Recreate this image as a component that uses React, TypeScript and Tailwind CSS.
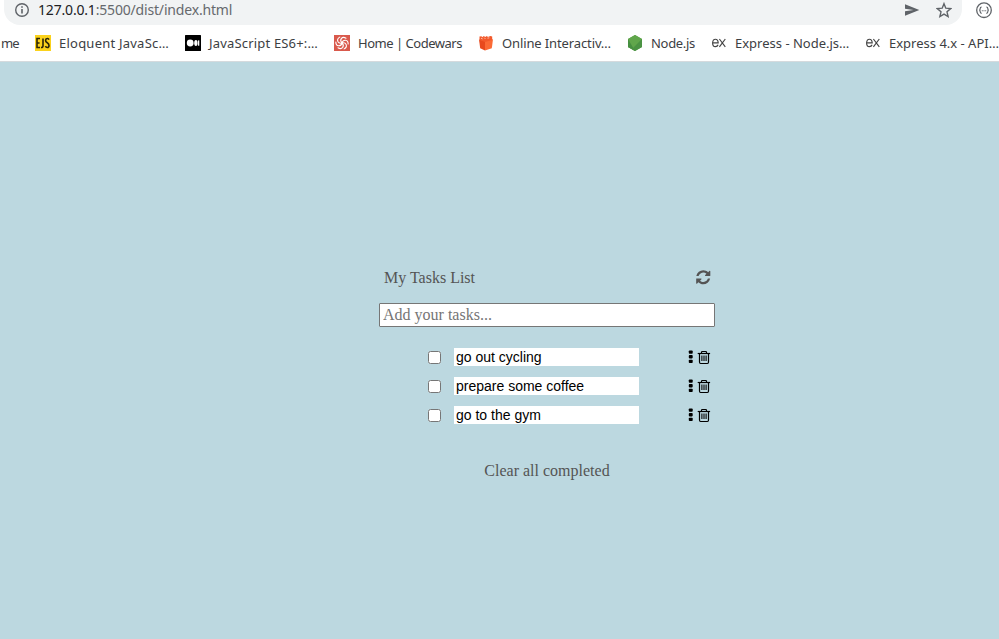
import type { ReactNode } from "react";

function EjsIcon() {
  return (
    <svg width="16" height="16" viewBox="0 0 16 16">
      <rect width="16" height="16" fill="#fbd21c" />
      <path d="M5 3.5H2v9h3M2 8h2.6M8 3.5v7.2q0 2-2 1.7M14 4.6q-.5-1.3-1.8-1.1-1.6.2-1.6 1.9 0 1.3 1.7 2.3 1.7 1 1.7 2.7 0 2-1.7 2.1-1.3 0-1.9-1.3" fill="none" stroke="#2b2508" strokeWidth="1.6" />
    </svg>
  );
}

function MediumIcon() {
  return (
    <svg width="16" height="16" viewBox="0 0 16 16">
      <rect width="16" height="16" rx=".5" fill="#000" />
      <circle cx="5.200" cy="8" r="3.400" fill="#fff" />
      <ellipse cx="10.900" cy="8" rx="1.700" ry="3" fill="#fff" />
      <rect x="13" y="5.200" width="1.300" height="5.600" rx=".5" fill="#fff" />
    </svg>
  );
}

function CodewarsIcon() {
  return (
    <svg width="16" height="16" viewBox="0 0 16 16">
      <rect width="16" height="16" fill="#d9594c" />
      <g fill="none" stroke="#fff" strokeWidth="1.100" strokeLinecap="round">
        {[0, 60, 120, 180, 240, 300].map((a) => (
          <path key={a} transform={`rotate(${a} 8 8)`} d="M8 8Q5.800 5.800 7.300 3.600Q9 1.400 12 3.200" />
        ))}
      </g>
    </svg>
  );
}

function ParcelIcon() {
  return (
    <svg width="16" height="16" viewBox="0 0 16 16">
      <path d="M1 4.500l6 1.300v9.800l-4.800-2.400z" fill="#e8491d" />
      <path d="M7 5.500l8-1.200-1.200 9L7 15.600z" fill="#fb6a35" />
      <path d="M1.500 5V1.500l2-.3.7 1.100 1.600-1.300 1.400 1 1.700-1 1 1 2.400-1 1.900.500V5L7 7z" fill="#f2592b" />
      <path d="M3 3.200l1.600.7M6.200 2.700l1.200 1.200M9.500 3.200l1.800-.4" stroke="#fff" strokeWidth=".6" />
    </svg>
  );
}

function NodeIcon() {
  return (
    <svg width="16" height="16" viewBox="0 0 16 16">
      <path d="M8 0l7 4v8l-7 4-7-4V4z" fill="#539e43" />
      <path d="M8 0l7 4L5 14.300 1 12V4z" fill="#60a64b" />
      <path d="M1 4l7 12-7-4z" fill="#468f40" />
      <path d="M15 4v8l-7 4-3-1.700z" fill="#4b9343" />
    </svg>
  );
}

function ExpressIcon() {
  return (
    <svg width="16" height="16" viewBox="0 0 16 16">
      <path d="M1.700 7.800h5.500Q7 4.200 4.400 4.200T1.600 7.900Q1.600 11.500 4.400 11.600q2.100 0 2.700-1.800M8.400 4l5.900 7.800M14.300 4l-5.900 7.800" fill="none" stroke="#444" strokeWidth="1.150" />
    </svg>
  );
}

const bookmarks: { label: string; icon: ReactNode; box: string }[] = [
  { label: "Eloquent JavaSc…", icon: <EjsIcon />, box: "w-[110px] tracking-[0.23px]" },
  { label: "JavaScript ES6+:…", icon: <MediumIcon />, box: "w-[109px] tracking-[0.18px]" },
  { label: "Home | Codewars", icon: <CodewarsIcon />, box: "w-[104px] tracking-[-0.48px]" },
  { label: "Online Interactiv…", icon: <ParcelIcon />, box: "w-[109px] tracking-[-0.12px]" },
  { label: "Node.js", icon: <NodeIcon />, box: "w-[44px] tracking-[-0.3px]" },
  { label: "Express - Node.js…", icon: <ExpressIcon />, box: "w-[114px]" },
  { label: "Express 4.x - API…", icon: <ExpressIcon />, box: "w-[112px]" },
];

function BrowserBar() {
  return (
    <header className="h-[62px] shrink-0 overflow-hidden border-b border-[#d5dadd] bg-white font-['Noto_Sans',sans-serif]">
      <div className="flex h-[25px] items-start">
        <div className="ml-1 flex h-[25px] w-[958px] items-start rounded-b-[16px] bg-[#f1f3f4] pl-[10px]">
          <svg className="mt-[2px]" width="16" height="16" viewBox="0 0 16 16" fill="none" stroke="#5f6368" strokeWidth="1.4">
            <circle cx="8" cy="8" r="6.3" />
            <path d="M8 7v4.500M8 4.300v1.500" strokeWidth="1.6" />
          </svg>
          <p className="ml-2 h-5 w-[300px] whitespace-nowrap text-[14px] leading-5 tracking-[-0.18px] text-[#66696d]">
            <span className="text-[#202124]">127.0.0.1</span>:5500/dist/index.html
          </p>
          <div className="ml-auto flex items-center gap-4 pr-[10px]">
            <svg width="16" height="20" viewBox="0 0 16 20">
              <path d="M1 4.200L15.300 10 1 15.800v-4.500l8.500-1.300L1 8.800z" fill="#5f6368" />
            </svg>
            <svg width="16" height="20" viewBox="0 0 16 20">
              <path d="M8 3.700l1.800 4.500 4.900.4L11 11.800l1.100 4.800L8 14.100l-4.100 2.500L5 11.800 1.300 8.600l4.900-.4z" fill="none" stroke="#5f6368" strokeWidth="1.4" />
            </svg>
          </div>
        </div>
        <svg className="ml-[14px] mt-[2px]" width="17" height="17" viewBox="0 0 17 17" fill="none" stroke="#5f6368">
          <circle cx="8" cy="8.200" r="7.300" strokeWidth="1.3" />
          <path d="M5.700 5q-1.500 0-1.500 1.500 0 1.700-1 1.700 1 0 1 1.600 0 1.500 1.500 1.500M10.300 5q1.500 0 1.500 1.500 0 1.700 1 1.700-1 0-1 1.600 0 1.500-1.500 1.500" strokeWidth="1.2" />
          <path d="M5.800 8.700h4.400" strokeWidth="1.1" strokeDasharray="1 .7" />
        </svg>
      </div>
      <nav className="flex h-9 w-[1010px] items-center whitespace-nowrap text-[13px] leading-4 text-[#3c4043]">
        <span className="w-[35px] shrink-0 pl-[1px] tracking-[-0.9px]">me</span>
        {bookmarks.map((b) => (
          <div key={b.label} className="mr-4 flex shrink-0 items-center gap-2">
            {b.icon}
            <span className={b.box}>{b.label}</span>
          </div>
        ))}
      </nav>
    </header>
  );
}

function RefreshIcon() {
  return (
    <svg width="16.5" height="16.5" viewBox="0 0 1792 1792" fill="#545454">
      <path d="M1639 1056q0 5-1 7-64 268-268 434.500t-478 166.500q-146 0-282.500-55t-243.500-157l-129 129q-19 19-45 19t-45-19-19-45v-448q0-26 19-45t45-19h448q26 0 45 19t19 45-19 45l-137 137q71 66 161 102t187 36q134 0 250-65t186-179q11-17 53-117 8-23 30-23h192q13 0 22.500 9.500t9.500 22.500zm25-800v448q0 26-19 45t-45 19h-448q-26 0-45-19t-19-45 19-45l138-138q-148-137-349-137-134 0-250 65t-186 179q-11 17-53 117-8 23-30 23h-199q-13 0-22.500-9.500t-9.500-22.500v-7q65-268 270-434.500t480-166.500q146 0 284 55.500t245 156.500l130-129q19-19 45-19t45 19 19 45z" />
    </svg>
  );
}

function TaskRow({ text }: { text: string }) {
  return (
    <li className="flex h-[18px] items-center">
      <input type="checkbox" className="m-0 size-[13px]" />
      <span className="ml-[13px] h-[18px] w-[185px] bg-white pl-[2px] font-['Liberation_Sans',Arial,sans-serif] text-[14px] leading-[18px] text-black">
        {text}
      </span>
      <svg className="ml-[49px]" width="6" height="14" viewBox="0 0 6 14">
        <rect x=".8" y=".5" width="3.900" height="3.300" rx=".8" />
        <rect x=".8" y="5.100" width="3.900" height="3.300" rx=".8" />
        <rect x=".8" y="9.700" width="3.900" height="3.300" rx=".8" />
      </svg>
      <svg className="ml-[3px]" width="14" height="16" viewBox="0 0 14 16" fill="none" stroke="#000">
        <path d="M.7 4.500h12.400" strokeWidth="1.200" />
        <path d="M4.500 4.400V3.300q0-.8.9-.8h3.200q.9 0 .9.800v1.100M2.500 4.500v8.500q0 1.500 1.100 1.500h6.800q1.100 0 1.100-1.500V4.500" strokeWidth="1.200" />
        <path d="M4.900 6.500v5.500M7 6.500v5.500M9.100 6.500v5.500" strokeWidth="1.100" />
      </svg>
    </li>
  );
}

export default function App() {
  return (
    <div className="flex h-[639px] w-[999px] flex-col overflow-hidden bg-[#bcd8e0]">
      <BrowserBar />
      <main className="ml-[379px] mt-[206px] w-[336px] font-['Liberation_Serif',serif] text-[16px] text-[#545454]">
        <div className="flex h-5 items-start justify-between pl-[5px] pr-[3.5px]">
          <h1 className="leading-5">My Tasks List</h1>
          <div className="pt-[1px]">
            <RefreshIcon />
          </div>
        </div>
        <input
          placeholder="Add your tasks..."
          className="mt-[15px] block h-6 w-full rounded-[1px] border border-[#767676] bg-white px-[3px] leading-[18px] placeholder:text-[#757575]"
        />
        <ul className="mt-[21px] flex flex-col gap-[11px] pl-[49px]">
          <TaskRow text="go out cycling" />
          <TaskRow text="prepare some coffee" />
          <TaskRow text="go to the gym" />
        </ul>
        <p className="mt-[37px] text-center leading-5">Clear all completed</p>
      </main>
    </div>
  );
}
